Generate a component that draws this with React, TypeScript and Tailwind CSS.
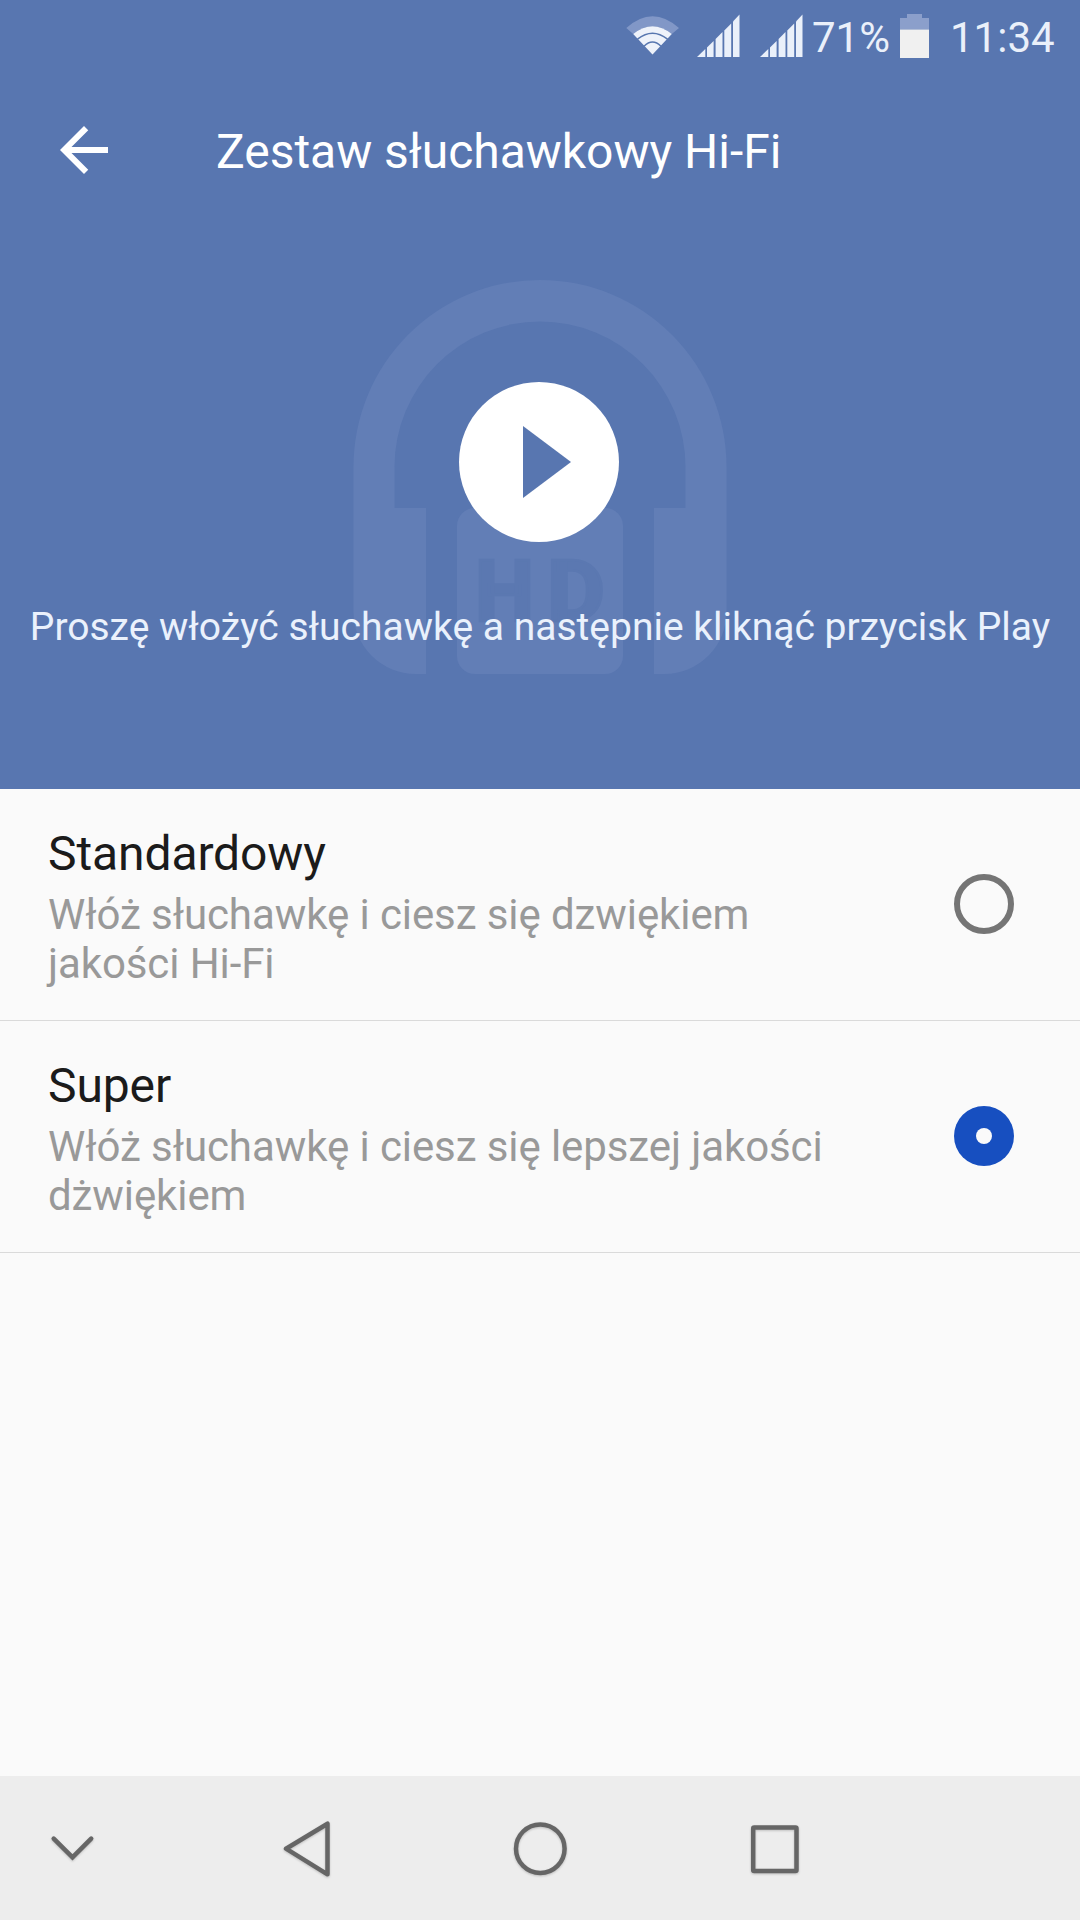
import React from "react";

function SignalIcon({ className }: { className?: string }) {
  return (
    <svg className={className} width="44" height="44" viewBox="0 0 44 44" fill="#eaf0fa">
      <path d="M0 43 L8.3 35 V43Z" />
      <path d="M10 33.5 L16.6 27 V43 H10Z" />
      <path d="M18.6 25 L25.5 18 V43 H18.6Z" />
      <path d="M27.3 16.5 L34.2 9.5 V43 H27.3Z" />
      <path d="M36 7.5 L42.5 0.5 V43 H36Z" />
    </svg>
  );
}

function StatusBar() {
  return (
    <div className="flex h-[74px] items-start pl-[626px] text-[42px] leading-[76px] text-[#eaf0fa]">
      <svg className="mt-[14px] shrink-0" width="54" height="44" viewBox="0 0 54 44">
        <path d="M0.3 14 Q26.5 -9.5 53 14 L45.8 20 Q26.5 4.5 7.2 20Z" fill="#8197c7" />
        <path d="M26.5 40.5 L7.2 20 Q26.5 4.5 45.8 20Z" fill="#eef2fa" />
        <path d="M11.5 25.2 Q26.5 13.5 41.5 25.2 M18 32.2 Q26.5 23.8 35 32.2" fill="none" stroke="#5776af" strokeWidth="1.5" />
      </svg>
      <SignalIcon className="ml-[17px] mt-[14px] shrink-0" />
      <SignalIcon className="ml-[19px] mt-[14px] shrink-0" />
      <span className="ml-[8px] w-[88px] shrink-0 whitespace-nowrap">71%</span>
      <svg className="mt-[14px] shrink-0" width="29" height="44" viewBox="0 0 29 44">
        <path d="M7 0 H22 V4 H29 V15.5 H0 V4 H7Z" fill="#8b9fcb" />
        <path d="M0 15.5 H29 V44 H0Z" fill="#f0f0f0" />
      </svg>
      <span className="ml-[21px] whitespace-nowrap">11:34</span>
    </div>
  );
}

function Watermark() {
  return (
    <svg className="absolute left-[353px] top-[280px]" width="374" height="394" viewBox="353 280 374 394">
      <path
        d="M353.5 467 A186.5 187 0 0 1 726.5 467 V612 A62 62 0 0 1 664.5 674 H654 V508 H685.5 V467 A145.5 145.5 0 0 0 394.5 467 V508 H426 V674 H415.5 A62 62 0 0 1 353.5 612Z"
        fill="#627eb6"
      />
      <rect x="457" y="508" width="166" height="166" rx="18" fill="#627eb6" />
      <g fill="#5b78b1" stroke="#5b78b1" strokeWidth="2.5" fontFamily="Roboto, sans-serif" fontWeight="800" fontSize="85">
        <text x="475" y="620.5" textLength="59" lengthAdjust="spacingAndGlyphs">H</text>
        <text x="547" y="620.5" textLength="58" lengthAdjust="spacingAndGlyphs">D</text>
      </g>
    </svg>
  );
}

function Option({ title, lines, checked }: { title: string; lines: string[]; checked: boolean }) {
  return (
    <div className="flex h-[232px] items-center border-b border-[#dadada] pl-[48px] pr-[66px]">
      <div className="grow self-start pt-[37px]">
        <div className="text-[48px] leading-[56px] tracking-[-0.1px] text-[#1b1b1b]">{title}</div>
        <div className="mt-2 text-[42px] leading-[49px] tracking-[-0.09px] text-[#999999]">
          {lines.map((line) => (
            <div key={line} className="whitespace-nowrap">{line}</div>
          ))}
        </div>
      </div>
      {checked ? (
        <div className="mb-[2px] flex size-[60px] shrink-0 items-center justify-center rounded-full bg-[#174fc0]">
          <div className="size-4 rounded-full bg-[#fafafa]" />
        </div>
      ) : (
        <div className="mb-[2px] size-[60px] shrink-0 rounded-full border-[6px] border-[#757575]" />
      )}
    </div>
  );
}

function NavBar() {
  return (
    <div className="flex h-[144px] items-center bg-[#ededed] pl-[48px] [&_svg]:drop-shadow-[0_1px_1px_rgba(0,0,0,0.2)]">
      <svg width="50" height="60" viewBox="48 1818 50 60" fill="none" stroke="#666666" strokeWidth="4.5" strokeLinecap="round">
        <path d="M53.7 1838.7 L72.5 1857.3 L91.2 1838.7" />
      </svg>
      <svg className="ml-[182px]" width="54" height="60" viewBox="280 1818 54 60" fill="none" stroke="#666666" strokeWidth="4.5" strokeLinejoin="round">
        <path d="M286 1848.7 L327.5 1823.7 V1874.3Z" />
      </svg>
      <svg className="ml-[176px]" width="60" height="60" viewBox="510 1818 60 60" fill="none" stroke="#666666" strokeWidth="4.5">
        <circle cx="540.3" cy="1848.7" r="24.3" />
      </svg>
      <svg className="ml-[175px]" width="60" height="60" viewBox="745 1818 60 60" fill="none" stroke="#666666" strokeWidth="4.5" strokeLinejoin="round">
        <rect x="753.2" y="1827.4" width="43.3" height="43.6" rx="1" />
      </svg>
    </div>
  );
}

export default function App() {
  return (
    <div className="flex h-[1920px] w-[1080px] flex-col overflow-hidden bg-[#fafafa] font-[Roboto,sans-serif]">
      <header className="relative h-[789px] shrink-0 bg-[#5876b0]">
        <Watermark />
        <div className="relative flex h-full flex-col">
          <StatusBar />
          <div className="flex h-[156px] items-center pl-[60px] text-white">
            <svg className="mb-[4px] shrink-0" width="48" height="48" viewBox="4 4 16 16" fill="white">
              <path d="M20 11H7.83l5.59-5.59L12 4l-8 8 8 8 1.41-1.41L7.83 13H20v-2z" />
            </svg>
            <h1 className="ml-[108px] whitespace-nowrap text-[48px] leading-[56px] tracking-[-0.03px]">Zestaw słuchawkowy Hi-Fi</h1>
          </div>
          <button aria-label="Play" className="ml-[459px] mt-[152px] size-40 shrink-0">
            <svg width="160" height="160" viewBox="0 0 160 160">
              <circle cx="80" cy="80" r="80" fill="white" />
              <path d="M64 44 L112 80 L64 116Z" fill="#5876b0" />
            </svg>
          </button>
          <p className="mt-[61px] whitespace-nowrap text-center text-[39px] leading-[48px] text-[#eaf1fc]">
            Proszę włożyć słuchawkę a następnie kliknąć przycisk Play
          </p>
        </div>
      </header>
      <main className="grow">
        <Option title="Standardowy" lines={["Włóż słuchawkę i ciesz się dzwiękiem", "jakości Hi-Fi"]} checked={false} />
        <Option title="Super" lines={["Włóż słuchawkę i ciesz się lepszej jakości", "dżwiękiem"]} checked />
      </main>
      <NavBar />
    </div>
  );
}
